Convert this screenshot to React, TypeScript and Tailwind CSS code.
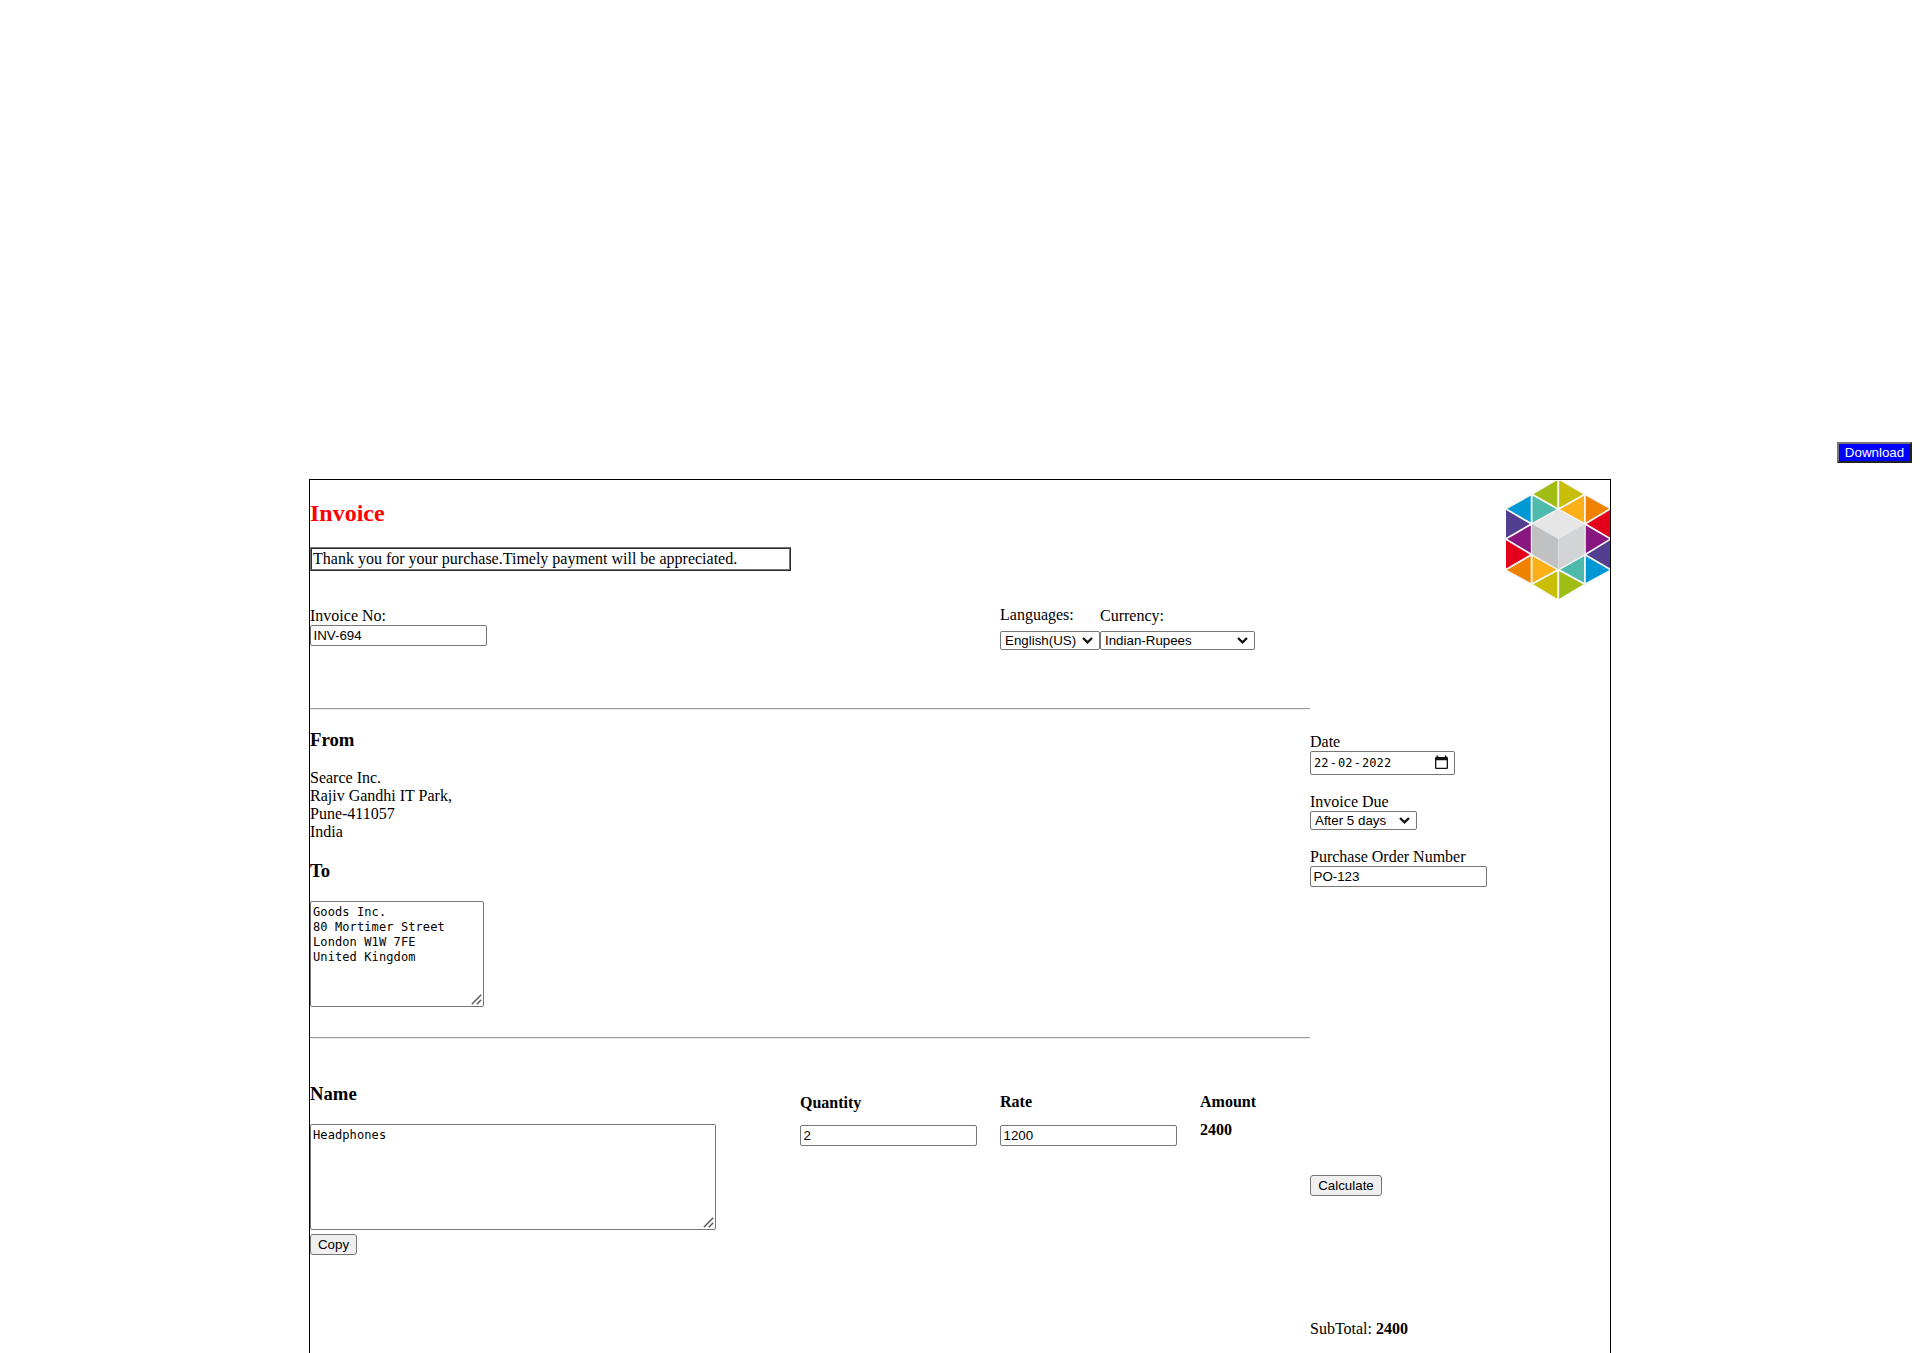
import React from "react";

const SANS = "font-['Liberation_Sans',sans-serif] text-[13.333px] leading-[15px]";
const MONO = "font-['DejaVu_Sans_Mono',monospace] text-[12px] leading-[15px] tracking-[0.1px]";

function TextField({ value }: { value: string }) {
  return (
    <div className={`${SANS} h-[21px] w-[177px] whitespace-nowrap rounded-[2px] border border-[#767676] bg-white px-[2.5px] pt-[2px]`}>
      {value}
    </div>
  );
}

function SelectField({ value, width }: { value: string; width: string }) {
  return (
    <div className={`${SANS} ${width} flex h-[19px] justify-between whitespace-nowrap rounded-[2px] border border-[#767676] bg-white pl-[4px] pr-[6px] pt-px`}>
      <span>{value}</span>
      <svg className="mt-[4px] h-[7px] w-[11px] shrink-0" viewBox="0 0 11 7" fill="none" stroke="#101010" strokeWidth="2.2">
        <path d="M1 1l4.500 4.400L10 1" />
      </svg>
    </div>
  );
}

function TextArea({ lines, width }: { lines: string[]; width: string }) {
  return (
    <div className={`${MONO} ${width} relative h-[106px] rounded-[2px] border border-[#767676] bg-white px-[2px] pt-[3px]`}>
      {lines.map((line) => (
        <div key={line} className="whitespace-nowrap">{line}</div>
      ))}
      <svg className="absolute bottom-px right-px h-[11px] w-[11px]" viewBox="0 0 11 11" stroke="#5c5c5c" strokeWidth="1.5">
        <path d="M0.800 10.200L10.200 0.800M5.800 10.200L10.200 5.800" />
      </svg>
    </div>
  );
}

function PushButton({ label, width }: { label: string; width: string }) {
  return (
    <button className={`${SANS} ${width} block h-[21px] whitespace-nowrap rounded-[3px] border border-[#767676] bg-[#efefef] p-0 text-center text-black`}>
      {label}
    </button>
  );
}

function Divider() {
  return <div className="h-[2px] w-full border-b border-t border-b-[#eeeeee] border-t-[#9a9a9a]" />;
}

const TILES: [string, string][] = [
  ["157,-4 157,88 77,43", "#a0bd14"],
  ["157,-4 157,88 237,43", "#c8be08"],
  ["77,43 77,132 -3,87", "#0098d4"],
  ["77,43 77,132 157,88", "#4dbaad"],
  ["237,43 237,132 157,88", "#fab016"],
  ["237,43 237,132 316,87", "#ef8200"],
  ["-10,81 77,132 -10,184", "#533f8f"],
  ["322,81 237,132 322,184", "#e4001b"],
  ["77,132 77,224 -3,178", "#88167f"],
  ["237,132 237,224 316,178", "#88167f"],
  ["-10,172 77,224 -10,276", "#e4001b"],
  ["322,172 237,224 322,276", "#533f8f"],
  ["77,224 77,313 -3,270", "#ef8200"],
  ["77,224 77,313 157,269", "#fab016"],
  ["237,224 237,313 157,269", "#4dbaad"],
  ["237,224 237,313 316,270", "#0098d4"],
  ["157,269 157,361 77,313", "#c8be08"],
  ["157,269 157,361 237,313", "#a0bd14"],
];

function Logo() {
  return (
    <svg className="h-[119px] w-[104px] self-end" viewBox="0 0 312 357" preserveAspectRatio="none">
      {TILES.map(([points, fill]) => (
        <polygon key={points} points={points} fill={fill} stroke="#f6f6f4" strokeWidth="5" />
      ))}
      <path d="M157 -10H-10V81L77 33L157 -10L237 33L322 81V-10Z" fill="#fff" />
      <path d="M157 367H-10V276L77 323L157 367L237 323L322 276V367Z" fill="#fff" />
      <polygon points="157,89 236,132 157,177 78,132" fill="#e6e6e6" />
      <polygon points="78,132 157,177 157,268 78,223" fill="#c0c1c3" />
      <polygon points="236,132 157,177 157,268 236,223" fill="#d3d4d6" />
    </svg>
  );
}

export default function App() {
  return (
    <div className="flex h-[1353px] w-[1920px] flex-col overflow-hidden bg-white pt-[442px] font-['Liberation_Serif',serif] text-[16px] leading-[18px] text-black">
      <button className={`${SANS} mr-[8px] h-[21px] w-[75px] shrink-0 self-end border-2 border-b-[#212121] border-l-[#767676] border-r-[#212121] border-t-[#767676] bg-[#0000ff] p-0 text-center text-white`}>
        Download
      </button>

      <div className="mx-auto mt-[16px] flex h-[1100px] w-[1302px] shrink-0 border border-black">
        <div className="flex w-[1000px] flex-col">
          <h2 className="mt-[20px] h-[27px] text-[24px] font-bold leading-[27px] text-[#ff0000]">Invoice</h2>
          <div className="mt-[20px] h-[24px] w-[481px] border border-b-[#2c2c2c] border-l-[#767676] border-r-[#2c2c2c] border-t-[#767676]">
            <div className="h-full border border-b-[#767676] border-l-[#2c2c2c] border-r-[#767676] border-t-[#2c2c2c] pl-px pt-px">
              Thank you for your purchase.Timely payment will be appreciated.
            </div>
          </div>

          <div className="mt-[36px] flex h-[43px]">
            <div className="w-[690px]">
              <div>Invoice No:</div>
              <TextField value="INV-694" />
            </div>
            <div className="flex w-[100px] flex-col justify-between">
              <div className="-mt-px">Languages:</div>
              <SelectField value="English(US)" width="w-[100px]" />
            </div>
            <div className="flex flex-col justify-between">
              <div>Currency:</div>
              <SelectField value="Indian-Rupees" width="w-[155px]" />
            </div>
          </div>

          <div className="mt-[58px]"><Divider /></div>

          <h3 className="mt-[19px] text-[18.72px] font-bold leading-[21px]">From</h3>
          <div className="mt-[19px]">
            <div>Searce Inc.</div>
            <div>Rajiv Gandhi IT Park,</div>
            <div>Pune-411057</div>
            <div>India</div>
          </div>
          <h3 className="mb-[20px] mt-[19px] text-[18.72px] font-bold leading-[21px]">To</h3>
          <TextArea lines={["Goods Inc.", "80 Mortimer Street", "London W1W 7FE", "United Kingdom"]} width="w-[174px]" />

          <div className="mt-[30px]"><Divider /></div>

          <div className="mt-[44px] flex">
            <div className="w-[490px]">
              <h3 className="mb-[20px] text-[18.72px] font-bold leading-[21px]">Name</h3>
              <TextArea lines={["Headphones"]} width="w-[406px]" />
              <div className="mt-[4px]"><PushButton label="Copy" width="w-[47px]" /></div>
            </div>
            <div className="w-[200px] pt-[11px]">
              <div className="mb-[13px] font-bold">Quantity</div>
              <TextField value="2" />
            </div>
            <div className="w-[200px] pt-[10px]">
              <div className="mb-[14px] font-bold">Rate</div>
              <TextField value="1200" />
            </div>
            <div className="pt-[10px] font-bold">
              <div className="mb-[10px]">Amount</div>
              <div>2400</div>
            </div>
          </div>
        </div>

        <div className="flex w-[300px] flex-col">
          <Logo />
          <div className="mt-[134px]">Date</div>
          <div className={`${MONO} flex h-[24px] w-[145px] justify-between rounded-[2px] border border-[#767676] pl-[2px] pr-[6px] pt-[4px]`}>
            <span className="flex">
              <span className="px-px">22</span>
              <span>-</span>
              <span className="px-px">02</span>
              <span>-</span>
              <span className="px-px">2022</span>
            </span>
            <svg className="-mt-px h-[15px] w-[13px]" viewBox="0 0 13 15" fill="#101010">
              <path fillRule="evenodd" d="M1.500 0.500H3.200V2H9.800V0.500H11.500V2H11.800Q13 2 13 3.200V12.800Q13 14 11.800 14H1.200Q0 14 0 12.800V3.200Q0 2 1.200 2H1.500zM1.300 5.300v7.400h10.400V5.300z" />
            </svg>
          </div>
          <div className="mt-[18px]">Invoice Due</div>
          <SelectField value="After 5 days" width="w-[107px]" />
          <div className="mt-[18px]">Purchase Order Number</div>
          <TextField value="PO-123" />
          <div className="mt-[288px]"><PushButton label="Calculate" width="w-[72px]" /></div>
          <div className="mt-[124px]">SubTotal: <b className="font-bold">2400</b></div>
        </div>
      </div>
    </div>
  );
}
